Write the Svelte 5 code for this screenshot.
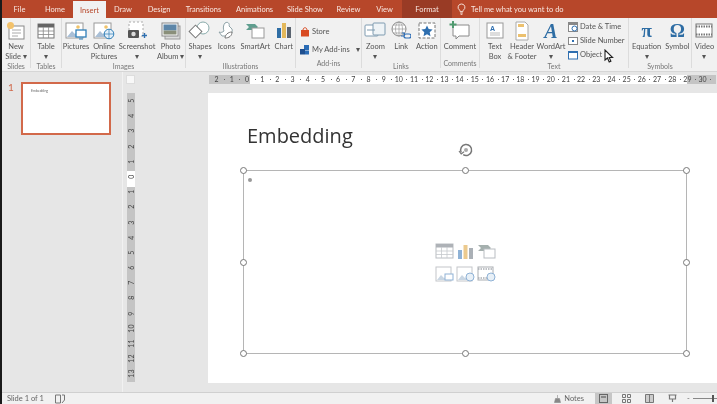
<script>
    const tabs = [
        { name: 'File', w: 35 },
        { name: 'Home', w: 36 },
        { name: 'Insert', w: 33, active: true },
        { name: 'Draw', w: 34 },
        { name: 'Design', w: 38 },
        { name: 'Transitions', w: 51 },
        { name: 'Animations', w: 51 },
        { name: 'Slide Show', w: 50 },
        { name: 'Review', w: 37 },
        { name: 'View', w: 35 },
        { name: 'Format', w: 50, context: true }
    ];

    const hNums = [2, 1, 0, 1, 2, 3, 4, 5, 6, 7, 8, 9, 10, 11, 12, 13, 14, 15, 16, 17, 18, 19, 20, 21, 22, 23, 24, 25, 26, 27, 28, 29, 30];
    const vNums = [5, 4, 3, 2, 1, 0, 1, 2, 3, 4, 5, 6, 7, 8, 9, 10, 11, 12, 13];
    const tickCount = 13;
</script>

<div class="window">
    <div class="strip"></div>
    <div class="app">
        <header class="tabs">
            {#each tabs as tab}
                <div class="tab" class:active={tab.active} class:context={tab.context} style="width:{tab.w}px">{tab.name}</div>
            {/each}
            <div class="tell">
                <svg width="9" height="12" viewBox="0 0 9 12"><path d="M4.500 1a3.300 3.300 0 0 0-2 6c.5.5.6 1 .6 1.600h2.800c0-.6.1-1.100.6-1.600a3.300 3.300 0 0 0-2-6zM3.200 10h2.600M3.600 11.300h1.800" fill="none" stroke="#f6dfd6" stroke-width="1"/></svg>
                <span>Tell me what you want to do</span>
            </div>
        </header>

        <div class="ribbon">
            <section class="group g-slides">
                <div class="btns">
                    <div class="btn">
                        <svg width="20" height="20" viewBox="0 0 20 20"><rect x="3" y="5" width="15" height="13" fill="#fff" stroke="#8a8a8a"/><path d="M6 9h9M6 12h9M6 15h6" stroke="#aaa"/><circle cx="4.500" cy="4.500" r="3.500" fill="#f3c26b"/></svg>
                        <span>New<br>Slide ▾</span>
                    </div>
                </div>
                <div class="label">Slides</div>
            </section>
            <section class="group g-tables">
                <div class="btns">
                    <div class="btn">
                        <svg width="20" height="20" viewBox="0 0 20 20"><rect x="2" y="3" width="16" height="14" fill="#fff" stroke="#777"/><rect x="2" y="3" width="16" height="3.500" fill="#666"/><path d="M2 10h16M2 13.500h16M7.300 6v11M12.600 6v11" stroke="#888" stroke-width=".8"/></svg>
                        <span>Table<br>▾</span>
                    </div>
                </div>
                <div class="label">Tables</div>
            </section>
            <section class="group g-images">
                <div class="btns spread">
                    <div class="btn">
                        <svg width="22" height="20" viewBox="0 0 22 20"><rect x="1" y="2" width="17" height="15" fill="#fff" stroke="#9a9a9a"/><path d="M2 16l5-6 3 3 2-2 4 5z" fill="#a9bfd6"/><circle cx="13" cy="6" r="1.800" fill="#f0c36a"/><rect x="11" y="9" width="10" height="7" fill="#fff" stroke="#2f7fb8" stroke-width="1.300"/><path d="M14 18h4" stroke="#2f7fb8"/></svg>
                        <span>Pictures</span>
                    </div>
                    <div class="btn">
                        <svg width="22" height="20" viewBox="0 0 22 20"><rect x="1" y="2" width="17" height="15" fill="#fff" stroke="#9a9a9a"/><path d="M2 16l5-6 3 3 2-2 4 5z" fill="#a9bfd6"/><circle cx="13" cy="6" r="1.800" fill="#f0c36a"/><circle cx="16" cy="13" r="4.800" fill="#e4eff8" stroke="#2f7fb8"/><path d="M11.500 13h9M16 8.500v9" stroke="#2f7fb8" stroke-width=".7"/></svg>
                        <span>Online<br>Pictures</span>
                    </div>
                    <div class="btn">
                        <svg width="22" height="20" viewBox="0 0 22 20"><rect x="3" y="1" width="14" height="14" fill="#fff" stroke="#aaa" stroke-dasharray="2 2"/><rect x="2" y="9" width="11" height="8" rx="1" fill="#555"/><circle cx="7.500" cy="13" r="2.200" fill="#ddd"/><path d="M16 14.500h5M18.500 12v5" stroke="#2f6fb0" stroke-width="1.400"/></svg>
                        <span>Screenshot<br>▾</span>
                    </div>
                    <div class="btn">
                        <svg width="22" height="20" viewBox="0 0 22 20"><rect x="5" y="5" width="15" height="13" fill="#ddd" stroke="#999"/><rect x="2" y="2" width="16" height="13" fill="#fff" stroke="#888"/><rect x="3.500" y="3.500" width="13" height="6" fill="#5d86a8"/><rect x="3.500" y="9.500" width="13" height="4" fill="#8a8f7a"/></svg>
                        <span>Photo<br>Album ▾</span>
                    </div>
                </div>
                <div class="label">Images</div>
            </section>
            <section class="group g-illus">
                <div class="btns spread">
                    <div class="btn">
                        <svg width="24" height="20" viewBox="0 0 24 20"><circle cx="15" cy="7" r="6" fill="#fff" stroke="#8aa"/><rect x="3" y="6" width="9" height="9" transform="rotate(45 7.500 10.500)" fill="#fff" stroke="#777"/></svg>
                        <span>Shapes<br>▾</span>
                    </div>
                    <div class="btn">
                        <svg width="20" height="20" viewBox="0 0 20 20"><path d="M9 2c3-2 5 1 4 3l3 3c1 3-1 7-5 7H6L3 11c2 1 4 0 5-1C7 8 7 4 9 2z" fill="#fff" stroke="#8fa3a8"/><path d="M9 17c0-3 3-6 7-6 0 4-3 6-7 6z" fill="#fff" stroke="#777"/></svg>
                        <span>Icons</span>
                    </div>
                    <div class="btn">
                        <svg width="20" height="20" viewBox="0 0 20 20"><path d="M1 3h9l3 3-3 3H1l3-3z" fill="#5f9e8f"/><rect x="7" y="7" width="12" height="10" fill="#fff" stroke="#999"/></svg>
                        <span>SmartArt</span>
                    </div>
                    <div class="btn">
                        <svg width="18" height="20" viewBox="0 0 18 20"><rect x="2" y="7" width="4" height="10" fill="#2f6ea5"/><rect x="7" y="2" width="4" height="15" fill="#e3b85b"/><rect x="12" y="6" width="4" height="11" fill="#5a6470"/></svg>
                        <span>Chart</span>
                    </div>
                </div>
                <div class="label">Illustrations</div>
            </section>
            <section class="group g-addins">
                <div class="addin-list">
                    <div class="addin">
                        <svg width="10" height="10" viewBox="0 0 10 10"><path d="M1 3h8v6.500H1z" fill="#d84a22"/><path d="M3 3c0-3 4-3 4 0" fill="none" stroke="#d84a22"/></svg>
                        <span>Store</span>
                    </div>
                    <div class="addin">
                        <svg width="10" height="10" viewBox="0 0 10 10"><rect x="4" y="0" width="5" height="5" fill="#2b6cb5"/><rect x="0" y="4" width="5" height="5.500" fill="#1f4f8f"/><rect x="5" y="5.500" width="4" height="4" fill="#2b6cb5"/></svg>
                        <span>My Add-ins</span>
                        <i class="caret">▾</i>
                    </div>
                </div>
                <div class="label">Add-ins</div>
            </section>
            <section class="group g-links">
                <div class="btns spread">
                    <div class="btn">
                        <svg width="22" height="20" viewBox="0 0 22 20"><rect x="1" y="4" width="13" height="11" rx="1" fill="#fff" stroke="#7f9bb0"/><rect x="9" y="2" width="12" height="12" rx="1" fill="#eef3f6" stroke="#7f9bb0"/><path d="M3 9h8" stroke="#7f9bb0"/></svg>
                        <span>Zoom<br>▾</span>
                    </div>
                    <div class="btn">
                        <svg width="20" height="20" viewBox="0 0 20 20"><circle cx="8" cy="8" r="7" fill="#fff" stroke="#888"/><path d="M1 8h14M8 1v14M2.500 4h11M2.500 12h11" stroke="#999" stroke-width=".7"/><ellipse cx="8" cy="8" rx="3.500" ry="7" fill="none" stroke="#999" stroke-width=".7"/><path d="M10 15h3a2 2 0 0 0 0-3h-2M18 13h-3a2 2 0 0 0 0 4h3a2 2 0 0 0 0-4" fill="none" stroke="#2b6cb5" stroke-width="1.200"/></svg>
                        <span>Link</span>
                    </div>
                    <div class="btn">
                        <svg width="20" height="20" viewBox="0 0 20 20"><rect x="2" y="2" width="16" height="15" fill="#fff" stroke="#777" stroke-dasharray="3 1.500"/><path d="M10 4.500l1.700 3.600 3.900.5-2.900 2.700.8 3.900-3.500-2-3.500 2 .8-3.900-2.900-2.700 3.900-.5z" fill="#2e6fb0"/></svg>
                        <span>Action</span>
                    </div>
                </div>
                <div class="label">Links</div>
            </section>
            <section class="group g-comments">
                <div class="btns">
                    <div class="btn">
                        <svg width="22" height="20" viewBox="0 0 22 20"><path d="M4 4h16v11h-10l-3 3v-3H4z" fill="#fff" stroke="#8a8a8a"/><path d="M4 0v7M0.500 3.500h7" stroke="#4f9a6f" stroke-width="2"/></svg>
                        <span>Comment</span>
                    </div>
                </div>
                <div class="label">Comments</div>
            </section>
            <section class="group g-text">
                <div class="btns text-row">
                    <div class="btn w-box">
                        <svg width="18" height="20" viewBox="0 0 18 20"><rect x="1" y="2" width="16" height="15" fill="#fff" stroke="#999"/><text x="4" y="10" class="letter">A</text><path d="M4 12h10M4 14h10" stroke="#bbb"/></svg>
                        <span>Text<br>Box</span>
                    </div>
                    <div class="btn w-header">
                        <svg width="16" height="20" viewBox="0 0 16 20"><path d="M2 1h9l3 3v15H2z" fill="#fff" stroke="#aaa"/><rect x="4" y="3" width="6" height="3" fill="#ecc16f"/><rect x="4" y="13" width="8" height="3" fill="#ecc16f"/></svg>
                        <span>Header<br>&amp; Footer</span>
                    </div>
                    <div class="btn w-art">
                        <span class="wa">A</span>
                        <span>WordArt<br>▾</span>
                    </div>
                    <div class="small-list">
                        <div class="small">
                            <svg width="10" height="10" viewBox="0 0 10 10"><rect x=".5" y=".5" width="9" height="9" fill="#fff" stroke="#888"/><rect x=".5" y=".5" width="9" height="2.500" fill="#888"/><circle cx="6.500" cy="6.500" r="2.500" fill="#fff" stroke="#2f6fb0"/></svg>
                            <span>Date &amp; Time</span>
                        </div>
                        <div class="small">
                            <svg width="10" height="10" viewBox="0 0 10 10"><rect x=".5" y="1.500" width="9" height="7" fill="#fff" stroke="#888"/><rect x="4" y="4" width="2" height="2" fill="#2f6fb0"/></svg>
                            <span>Slide Number</span>
                        </div>
                        <div class="small">
                            <svg width="10" height="10" viewBox="0 0 10 10"><rect x=".5" y="1.500" width="9" height="7.500" fill="#fff" stroke="#2f6fb0"/><rect x=".5" y="1.500" width="9" height="1.500" fill="#2f6fb0"/></svg>
                            <span>Object</span>
                        </div>
                    </div>
                </div>
                <div class="label">Text</div>
            </section>
            <section class="group g-symbols">
                <div class="btns sym-row">
                    <div class="btn">
                        <span class="glyph">π</span>
                        <span>Equation<br>▾</span>
                    </div>
                    <div class="btn">
                        <span class="glyph">Ω</span>
                        <span>Symbol</span>
                    </div>
                </div>
                <div class="label">Symbols</div>
            </section>
            <section class="group g-media">
                <div class="btns">
                    <div class="btn">
                        <svg width="18" height="20" viewBox="0 0 18 20"><rect x="1" y="3" width="16" height="13" fill="#fff" stroke="#777"/><path d="M1 5.500h16M1 13.500h16" stroke="#777" stroke-width="2" stroke-dasharray="1.500 1"/></svg>
                        <span>Video<br>▾</span>
                    </div>
                </div>
            </section>
        </div>

        <div class="workspace">
            <aside class="thumbs">
                <span class="num">1</span>
                <div class="thumb"><span>Embedding</span></div>
            </aside>
            <main class="editor">
                <div class="corner-row">
                    <div class="corner"><i></i></div>
                    <div class="hruler">
                        {#each hNums as n}
                            <span>{n}</span>
                        {/each}
                    </div>
                </div>
                <div class="ticks">
                    {#each Array(tickCount) as _}
                        <i></i>
                    {/each}
                </div>
                <div class="editor-body">
                    <div class="vruler">
                        {#each vNums as n, i}
                            <span class:zero={i === 5}>{n}</span>
                        {/each}
                    </div>
                    <div class="slide">
                        <h1>Embedding</h1>
                        <div class="rotate">
                            <svg width="16" height="16" viewBox="0 0 16 16"><path d="M3.200 10.500a5.500 5.500 0 1 1 2 2.200" fill="none" stroke="#777" stroke-width="1.500"/><path d="M1 9l2.200 3 2.800-2.200" fill="none" stroke="#777" stroke-width="1.200"/><circle cx="8" cy="8" r="2" fill="#aaa"/></svg>
                        </div>
                        <div class="placeholder">
                            <i class="bullet"></i>
                            <i class="h tl"></i><i class="h tc"></i><i class="h tr"></i>
                            <i class="h ml"></i><i class="h mr"></i>
                            <i class="h bl"></i><i class="h bc"></i><i class="h br"></i>
                            <div class="insert-icons">
                                <svg width="19" height="17" viewBox="0 0 19 17"><rect x="1" y="1" width="17" height="14" fill="#fff" stroke="#b9bdc2"/><rect x="1" y="1" width="17" height="3.500" fill="#aeb2b7"/><path d="M1 8h17M1 11.500h17M6.500 4v11M12 4v11" stroke="#c5c9cd" stroke-width=".8"/></svg>
                                <svg width="19" height="17" viewBox="0 0 19 17"><rect x="2" y="7" width="4" height="9" fill="#8fb2d6"/><rect x="7.500" y="2" width="4" height="14" fill="#ecca8e"/><rect x="13" y="5" width="4" height="11" fill="#aab0b6"/></svg>
                                <svg width="19" height="17" viewBox="0 0 19 17"><path d="M1 2h10l3 3-3 3H1l3-3z" fill="#a5b0ae"/><rect x="7" y="6" width="11" height="9" fill="#fff" stroke="#b9bdc2"/></svg>
                                <svg width="19" height="17" viewBox="0 0 19 17"><rect x="1" y="1" width="15" height="14" fill="#fff" stroke="#c3c6ca"/><path d="M2 14l4-5 3 3 2-1 3 3z" fill="#c9d6e3"/><rect x="10" y="8" width="8" height="6" fill="#fff" stroke="#8fb2d6"/></svg>
                                <svg width="19" height="17" viewBox="0 0 19 17"><rect x="1" y="1" width="15" height="14" fill="#fff" stroke="#c3c6ca"/><path d="M2 14l4-5 3 3 2-1 3 3z" fill="#c9d6e3"/><circle cx="14" cy="11" r="4" fill="#e8f0f7" stroke="#8fb2d6"/></svg>
                                <svg width="19" height="17" viewBox="0 0 19 17"><rect x="1" y="1" width="15" height="13" fill="#fff" stroke="#a9adb2"/><path d="M1 3h15M1 12h15" stroke="#a9adb2" stroke-width="1.500" stroke-dasharray="1.500 1"/><circle cx="14" cy="11" r="4" fill="#e8f0f7" stroke="#8fb2d6"/></svg>
                            </div>
                        </div>
                    </div>
                </div>
            </main>
        </div>

        <footer class="status">
            <span class="count">Slide 1 of 1</span>
            <svg class="notes-page" width="10" height="10" viewBox="0 0 10 10"><path d="M.5 1h5v8h-5zM7 1h2.500v5L7 9" fill="none" stroke="#777"/></svg>
            <div class="status-right">
                <svg class="notes-icon" width="7" height="8" viewBox="0 0 7 8"><path d="M3.500 0v3M1.500 3.500h4l1 4h-6z" fill="#888" stroke="#888" stroke-width=".6"/></svg>
                <span class="notes">Notes</span>
                <span class="view on"><svg width="9" height="9" viewBox="0 0 9 9"><rect x=".5" y=".5" width="8" height="8" fill="none" stroke="#666"/><rect x="2" y="2" width="5" height="2" fill="#888"/></svg></span>
                <span class="view"><svg width="9" height="9" viewBox="0 0 9 9"><path d="M.5.500h3v3h-3zM5.500.500h3v3h-3zM.5 5.500h3v3h-3zM5.500 5.500h3v3h-3z" fill="none" stroke="#777"/></svg></span>
                <span class="view"><svg width="9" height="9" viewBox="0 0 9 9"><path d="M.5.500h8v8h-8zM4.500.500v8" fill="#ccc" stroke="#777"/></svg></span>
                <span class="view"><svg width="9" height="9" viewBox="0 0 9 9"><path d="M.5 1h8M1.500 1v4h6V1M4.500 5v3" fill="none" stroke="#777" stroke-width="1.200"/></svg></span>
                <div class="zoom-slider"><b>-</b><i></i><em></em></div>
            </div>
        </footer>
    </div>

    <svg class="cursor" width="10" height="14" viewBox="0 0 10 14"><path d="M1 1v10l2.500-2 1.700 4 1.700-.8-1.700-3.700h3.400z" fill="#fff" stroke="#222" stroke-width="1.100"/></svg>
</div>

<style>
    :global(body) {
        margin: 0;
        background: #e6e6e6;
    }

    .window {
        width: 717px;
        height: 404px;
        display: flex;
        position: relative;
        overflow: hidden;
        font-family: Lato, "Open Sans", "Liberation Sans", sans-serif;
        filter: blur(0.35px);
    }

    .strip {
        width: 2px;
        background: #1a1a1a;
        flex: none;
    }

    .app {
        width: 715px;
        display: flex;
        flex-direction: column;
    }

    .tabs {
        height: 18px;
        background: #b7472a;
        display: flex;
        flex: none;
        color: #f8e7e1;
        font-size: 7.500px;
    }

    .tab {
        display: flex;
        align-items: center;
        justify-content: center;
        flex: none;
        padding-top: 1px;
        box-sizing: border-box;
    }

    .tab.active {
        background: #f1f1f1;
        color: #b7472a;
        margin-top: 1px;
    }

    .tab.context {
        background: #993b25;
    }

    .tell {
        display: flex;
        align-items: center;
        gap: 5px;
        padding-left: 5px;
        font-size: 7.500px;
    }

    .ribbon {
        height: 54px;
        flex: none;
        display: flex;
        background: #f1f1f1;
        border-bottom: 1px solid #d6d6d6;
        box-sizing: border-box;
        color: #555;
        font-size: 7.500px;
        line-height: 9.500px;
    }

    .group {
        flex: none;
        display: flex;
        flex-direction: column;
        border-right: 1px solid #dcdcdc;
        box-sizing: border-box;
        margin-bottom: 3px;
    }

    .g-slides { width: 29px; }
    .g-tables { width: 31px; }
    .g-images { width: 124px; }
    .g-illus { width: 110px; }
    .g-addins { width: 66px; }
    .g-links { width: 79px; }
    .g-comments { width: 39px; }
    .g-text { width: 149px; }
    .g-symbols { width: 63px; }
    .g-media { flex: 1; border-right: 0; }

    .btns {
        flex: 1;
        display: flex;
        justify-content: center;
        padding-top: 3px;
    }

    .spread {
        justify-content: space-around;
    }

    .text-row {
        justify-content: flex-start;
    }

    .sym-row {
        justify-content: flex-start;
        gap: 4px;
        padding-left: 3px;
    }

    .w-box { width: 30px; }
    .w-header { width: 24px; }
    .w-art { width: 34px; }

    .btn {
        display: flex;
        flex-direction: column;
        align-items: center;
        text-align: center;
        white-space: nowrap;
    }

    .btn svg, .glyph, .wa {
        height: 20px;
        margin-bottom: 1px;
        flex: none;
    }

    .glyph {
        font-family: "Liberation Serif", serif;
        font-size: 19px;
        line-height: 20px;
        color: #2e6da4;
        font-weight: bold;
    }

    .wa {
        font-family: "Liberation Serif", serif;
        font-style: italic;
        font-size: 20px;
        line-height: 20px;
        color: #2e6da4;
        font-weight: bold;
    }

    .letter {
        font-size: 7px;
        fill: #2f6fb0;
        font-family: "Liberation Sans", sans-serif;
        font-weight: bold;
    }

    .label {
        height: 10px;
        text-align: center;
        font-size: 7px;
        line-height: 10px;
        color: #777;
        flex: none;
    }

    .addin-list {
        flex: 1;
        display: flex;
        flex-direction: column;
        gap: 8px;
        padding: 9px 0 0 4px;
    }

    .addin, .small {
        display: flex;
        align-items: center;
        gap: 2px;
        white-space: nowrap;
    }

    .caret {
        font-style: normal;
        margin-left: 4px;
    }

    .small-list {
        display: flex;
        flex-direction: column;
        gap: 4px;
        padding-top: 1px;
    }

    .workspace {
        flex: 1;
        display: flex;
        min-height: 0;
        background: #e6e6e6;
    }

    .thumbs {
        width: 121px;
        flex: none;
        display: flex;
        gap: 5px;
        padding: 10px 0 0 6px;
        box-sizing: border-box;
        border-right: 1px solid #f1f1f1;
    }

    .num {
        font-size: 10px;
        line-height: 10px;
        color: #d0694b;
        width: 8px;
    }

    .thumb {
        width: 90px;
        height: 53px;
        box-sizing: border-box;
        background: #fff;
        border: 2px solid #d2694a;
        font-size: 3.500px;
        color: #666;
        padding: 5px 0 0 8px;
    }

    .editor {
        flex: 1;
        display: flex;
        flex-direction: column;
        min-width: 0;
    }

    .corner-row {
        display: flex;
        height: 10px;
        margin-top: 3px;
        flex: none;
        font-size: 7px;
        overflow: hidden;
    }

    .corner {
        width: 86px;
        flex: none;
        display: flex;
        padding-left: 3px;
        box-sizing: border-box;
    }

    .corner i {
        width: 9px;
        height: 9px;
        background: #f8f8f8;
        border: 1px solid #ddd;
        box-sizing: border-box;
    }

    .hruler {
        display: flex;
        flex: none;
        height: 9px;
        color: #444;
        background: linear-gradient(to right, #c4c4c4 0 41px, #fff 41px 478px, #c4c4c4 478px);
        width: 507px;
        line-height: 9px;
    }

    .hruler span {
        width: 15.200px;
        flex: none;
        text-align: center;
        position: relative;
    }

    /* half-centimetre dot between the numbers */
    .hruler span::after {
        content: "";
        position: absolute;
        right: -1px;
        top: 4px;
        width: 1px;
        height: 1px;
        background: #666;
    }

    .ticks {
        height: 8px;
        display: flex;
        padding-left: 163px;
        gap: 36.600px;
        flex: none;
    }

    .ticks i {
        width: 2px;
        height: 3px;
        background: #666;
    }

    .editor-body {
        flex: 1;
        display: flex;
        min-height: 0;
        padding: 0 0 9px 4px;
        box-sizing: border-box;
    }

    .vruler {
        width: 8px;
        flex: none;
        display: flex;
        flex-direction: column;
        background: linear-gradient(to bottom, #c4c4c4 0 78px, #fff 78px 94px, #c4c4c4 94px);
        margin-right: 73px;
        font-size: 7px;
        color: #444;
        height: 289px;
    }

    .vruler span {
        height: 15.200px;
        flex: none;
        display: flex;
        align-items: center;
        justify-content: center;
        transform: rotate(-90deg);
    }

    .slide {
        flex: 1;
        background: #fff;
        position: relative;
        height: 290px;
    }

    h1 {
        margin: 0;
        position: absolute;
        left: 39px;
        top: 28px;
        font-family: "Open Sans", "Liberation Sans", sans-serif;
        font-weight: 400;
        font-size: 20px;
        line-height: 30px;
        color: #333;
    }

    .rotate {
        position: absolute;
        left: 250px;
        top: 49px;
    }

    .placeholder {
        position: absolute;
        left: 35px;
        top: 77px;
        width: 444px;
        height: 184px;
        border: 1px solid #b5b5b5;
        box-sizing: border-box;
    }

    .bullet {
        position: absolute;
        left: 4px;
        top: 7px;
        width: 4px;
        height: 4px;
        border-radius: 50%;
        background: #999;
    }

    .h {
        position: absolute;
        width: 7px;
        height: 7px;
        border: 1px solid #777;
        border-radius: 50%;
        background: #fff;
        box-sizing: border-box;
    }

    .tl { left: -4px; top: -4px; }
    .tc { left: 218px; top: -4px; }
    .tr { right: -4px; top: -4px; }
    .ml { left: -4px; top: 88px; }
    .mr { right: -4px; top: 88px; }
    .bl { left: -4px; bottom: -4px; }
    .bc { left: 218px; bottom: -4px; }
    .br { right: -4px; bottom: -4px; }

    .insert-icons {
        position: absolute;
        left: 191px;
        top: 72px;
        display: grid;
        grid-template-columns: repeat(3, 19px);
        gap: 6px 2px;
    }

    .status {
        height: 12px;
        flex: none;
        display: flex;
        align-items: center;
        background: #f1f1f1;
        border-top: 1px solid #d0d0d0;
        box-sizing: border-box;
        color: #666;
        font-size: 7.500px;
    }

    .count {
        padding-left: 5px;
    }

    .notes-page {
        margin-left: 11px;
    }

    .status-right {
        margin-left: auto;
        display: flex;
        align-items: center;
        height: 100%;
    }

    .notes-icon {
        margin-right: 3px;
    }

    .notes {
        margin-right: 11px;
    }

    .view {
        width: 17px;
        height: 100%;
        display: flex;
        align-items: center;
        justify-content: center;
        margin-right: 6px;
    }

    .view.on {
        background: #c6c6c6;
    }

    .zoom-slider {
        display: flex;
        align-items: center;
        width: 30px;
        height: 100%;
        position: relative;
    }

    .zoom-slider b {
        font-weight: normal;
        margin-right: 3px;
    }

    .zoom-slider i {
        flex: 1;
        height: 1px;
        background: #888;
    }

    .zoom-slider em {
        position: absolute;
        left: 25px;
        top: 2px;
        width: 2px;
        height: 7px;
        background: #555;
    }

    .cursor {
        position: absolute;
        left: 604px;
        top: 49px;
    }
</style>
